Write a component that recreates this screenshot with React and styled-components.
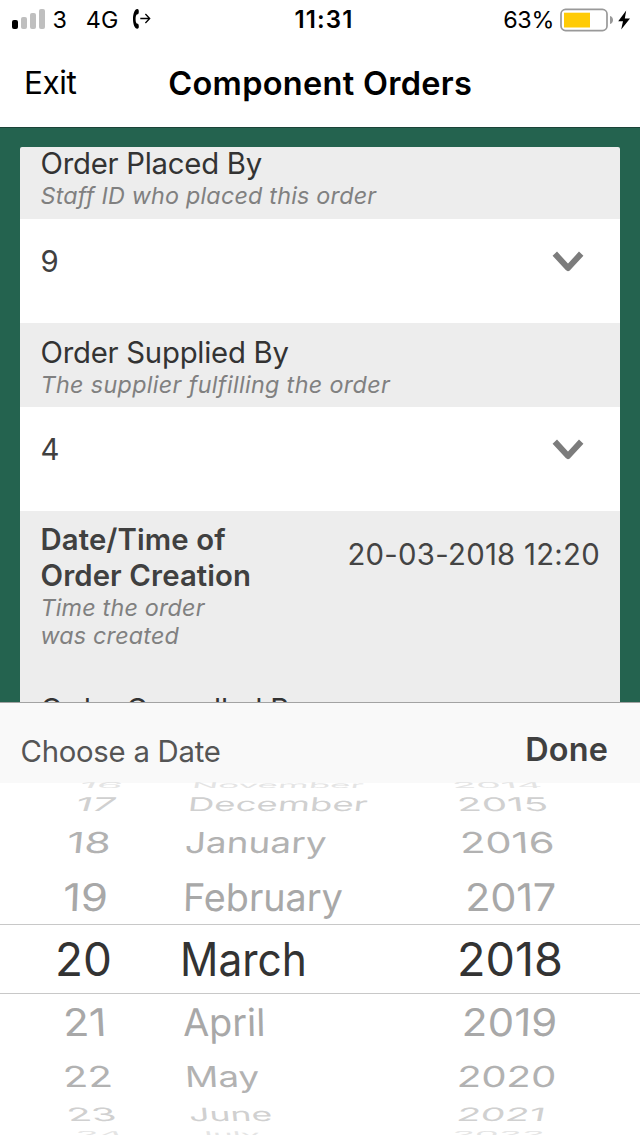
import React from "react";
import styled, { createGlobalStyle } from "styled-components";

const Global = createGlobalStyle`
  * { box-sizing: border-box; }
  body { margin: 0; background: #fff; font-family: Inter, "Liberation Sans", sans-serif; }
`;

const Screen = styled.div`
  display: flex;
  flex-direction: column;
  width: 640px;
  height: 1135px;
  overflow: hidden;
  background: #fff;
`;

const StatusBar = styled.header`
  display: grid;
  grid-template-columns: 1fr auto 1fr;
  align-items: center;
  height: 40px;
  padding: 0 9px 0 12px;
  font-size: 23.3px;
  line-height: 40px;
  color: #000;
`;

const StatusGroup = styled.div`
  display: flex;
  align-items: center;
  height: 40px;
  justify-content: ${(p) => (p.$end ? "flex-end" : "flex-start")};
`;

const StatusText = styled.span`
  margin-left: ${(p) => p.$gap || 0}px;
  letter-spacing: ${(p) => p.$track || 0}px;
`;

const Clock = styled.time`
  font-size: 24px;
  font-weight: 600;
  letter-spacing: 1.1px;
  padding-left: 5px;
`;

const Bars = styled.div`
  display: flex;
  align-items: flex-end;
  gap: 3px;
  height: 20px;
  margin-top: -2px;
`;

const Bar = styled.i`
  width: 6px;
  height: ${(p) => p.$h}px;
  border-radius: 2px;
  background: ${(p) => (p.$on ? "#000" : "#bfbfbf")};
`;

const ForwardIcon = styled.svg`
  margin: -2px 0 0 12.8px;
`;

const BatteryIcon = styled.svg`
  margin: -1px 0 0 6px;
`;

const NavBar = styled.nav`
  display: grid;
  grid-template-columns: 1fr auto 1fr;
  height: 88px;
  padding: 0 24px;
  border-bottom: 1px solid #1b4338;
`;

const NavButton = styled.button`
  justify-self: start;
  align-self: start;
  padding: 0;
  border: 0;
  background: none;
  font: 400 31.5px/85px Inter, sans-serif;
  letter-spacing: -0.4px;
  color: #000;
`;

const NavTitle = styled.h1`
  margin: 0;
  font-size: 32.5px;
  font-weight: 600;
  line-height: 87px;
  letter-spacing: 0.3px;
  padding-left: 0.5px;
`;

const Backdrop = styled.main`
  flex: none;
  height: 574px;
  padding: 19px 20px 0;
  background: #24634f;
  overflow: hidden;
`;

const Card = styled.section`
  height: 555px;
  overflow: hidden;
  border-radius: 2px 2px 0 0;
  background: #ededed;
`;

const Scroller = styled.div`
  margin-top: -12px;
`;

const FieldHeader = styled.div`
  height: ${(p) => p.$height || 84}px;
  display: flex;
  justify-content: space-between;
  padding: ${(p) => p.$top || 11}px 20px 0 20.5px;
`;

const FieldTitle = styled.h2`
  margin: 0;
  font-size: 29.3px;
  line-height: 36px;
  font-weight: ${(p) => (p.$strong ? 600 : 400)};
  letter-spacing: ${(p) => (p.$strong ? 0.12 : -0.24)}px;
  color: ${(p) => (p.$strong ? "#404040" : "#333")};
  white-space: pre-line;
`;

const FieldHint = styled.p`
  margin: 0;
  font-size: 23.3px;
  line-height: 28px;
  font-style: italic;
  letter-spacing: ${(p) => p.$track}px;
  color: #808080;
  white-space: pre-line;
`;

const FieldStamp = styled.time`
  font-size: 29.3px;
  line-height: 66px;
  letter-spacing: 0.28px;
  color: #444;
`;

const FieldSelect = styled.div`
  display: flex;
  align-items: center;
  justify-content: space-between;
  height: 104px;
  padding: 0 36px 19px 20.5px;
  background: #fff;
  font-size: 29.3px;
  line-height: 35px;
  color: #404040;
`;

const ChevronIcon = styled.svg`
  margin-top: -1px;
`;

const Sheet = styled.section`
  flex: 1;
  display: flex;
  flex-direction: column;
  overflow: hidden;
`;

const SheetBar = styled.div`
  display: flex;
  align-items: center;
  justify-content: space-between;
  flex: none;
  height: 81px;
  padding: 0 32px 0 20.5px;
  border-top: 1px solid #a3a3a3;
  background: #f9f9f9;
`;

const SheetTitle = styled.span`
  padding-top: 17px;
  font-size: 29.3px;
  line-height: 36px;
  letter-spacing: -0.25px;
  color: #555;
`;

const DoneButton = styled.button`
  padding: 13px 0 0;
  border: 0;
  background: none;
  font: 600 32.4px/36px Inter, sans-serif;
  letter-spacing: 0.15px;
  color: #404040;
`;

const Wheel = styled.div`
  flex: none;
`;

const WheelRow = styled.div`
  display: grid;
  grid-template-columns: 170px 260px 210px;
  align-items: center;
  height: ${(p) => p.$h}px;
  padding-top: ${(p) => p.$pad || 0}px;
  color: ${(p) => p.$color};
  font-size: ${(p) => (p.$selected ? 45.4 : 40)}px;
  border: solid #c8c8c8;
  border-width: ${(p) => (p.$selected ? "1px 0" : "0")};
`;

const WheelItem = styled.span`
  justify-self: start;
  line-height: 0;
  white-space: nowrap;
  margin-left: ${(p) => p.$left}px;
  transform-origin: 0 50%;
  transform: matrix(${(p) => `${p.$sx}, 0, ${p.$lean * p.$sy}, ${p.$sy}, 0, ${p.$dy}`});
`;

const COLUMN_START = [0, 170, 430];

// Each item: label, left edge on screen, horizontal stretch.
const ROWS = [
  { h: 4, sy: 0.2, dy: 0, color: "#e4e4e4", lean: [-0.5, -0.2, 0.25], items: [["16", 80, 1.045], ["November", 192.4, 0.875], ["2014", 452, 0.985]] },
  { h: 34.4, sy: 0.47, color: "#d0d0d0", lean: [-0.3, -0.12, 0.12], items: [["17", 76, 1.03], ["December", 187.8, 0.915], ["2015", 457, 1.01]] },
  { h: 41.8, sy: 0.72, color: "#b2b2b2", lean: [-0.1, -0.05, 0.06], items: [["18", 67, 1.071], ["January", 185, 0.923], ["2016", 459.6, 1.04]] },
  { h: 60.8, pad: 5.6, sy: 0.95, dy: 1.3, color: "#a8a8a8", lean: [-0.04, -0.02, 0.03], items: [["19", 62.5, 1.097], ["February", 182.5, 0.945], ["2017", 464.5, 1.035]] },
  { h: 70, pad: 1, sy: 1.01, dy: 1.2, selected: true, color: "#333", lean: [0, 0, 0], items: [["20", 55, 1.01], ["March", 179.5, 0.936], ["2018", 457.3, 1.03]] },
  { h: 56, sy: 0.95, color: "#a8a8a8", lean: [0.05, 0.02, -0.03], items: [["21", 63, 1.065], ["April", 183, 0.945], ["2019", 462, 1.05]] },
  { h: 52.6, sy: 0.72, color: "#b2b2b2", lean: [0.1, 0.05, -0.06], items: [["22", 62.5, 1.01], ["May", 185.2, 0.922], ["2020", 457.3, 1.0]] },
  { h: 22.8, sy: 0.46, color: "#d0d0d0", lean: [0.25, 0.1, -0.2], items: [["23", 67, 1.0], ["June", 189, 0.889], ["2021", 457, 0.98]] },
  { h: 17.2, sy: 0.2, dy: 0, color: "#e4e4e4", lean: [0.5, 0.2, -0.25], items: [["24", 76, 0.96], ["July", 194, 0.834], ["2022", 452, 0.94]] },
];

function Chevron() {
  return (
    <ChevronIcon width="32" height="21" viewBox="0 0 32 21">
      <path d="M2.8 2.6 L16 17 L29.2 2.6" fill="none" stroke="#7c7c7c" strokeWidth="6" strokeLinejoin="round" />
    </ChevronIcon>
  );
}

function SelectField({ title, hint, track, value, top }) {
  return (
    <>
      <FieldHeader $top={top}>
        <div>
          <FieldTitle>{title}</FieldTitle>
          <FieldHint $track={track}>{hint}</FieldHint>
        </div>
      </FieldHeader>
      <FieldSelect>
        {value}
        <Chevron />
      </FieldSelect>
    </>
  );
}

export default function App() {
  return (
    <Screen>
      <Global />
      <StatusBar>
        <StatusGroup>
          <Bars>
            <Bar $h={9} $on />
            <Bar $h={12} />
            <Bar $h={16} />
            <Bar $h={20} />
          </Bars>
          <StatusText $gap={7.5}>3</StatusText>
          <StatusText $gap={18.8} $track={0.3}>4G</StatusText>
          <ForwardIcon width="19" height="22" viewBox="0 0 19 22">
            <path d="M5.2 1 C2.8 1.2 1 5.5 1 11 C1 16.5 2.8 20.6 5.2 20.8 C6.5 20.8 6.9 19.8 6.8 18 C6.7 16.2 6 15.4 4.7 15.5 C3.8 14.4 3.6 12.8 3.6 11 C3.6 9.2 3.8 7.6 4.7 6.4 C6 6.5 6.7 5.7 6.8 3.9 C6.9 2 6.5 1 5.2 1 Z" fill="#000" />
            <path d="M8.3 10.5 H17.4 M13.4 6 L17.7 10.5 L13.4 15" fill="none" stroke="#000" strokeWidth="1.3" />
          </ForwardIcon>
        </StatusGroup>
        <Clock>11:31</Clock>
        <StatusGroup $end>
          <StatusText $track={-0.3}>63%</StatusText>
          <BatteryIcon width="71" height="24" viewBox="0 0 71 24">
            <rect x="1" y="1.4" width="46" height="21.2" rx="4.6" fill="#fff" stroke="#999" strokeWidth="1.7" />
            <rect x="4" y="4.7" width="26" height="14.8" fill="#ffcb05" />
            <path d="M50 8 C54 9 54 15 50 16 Z" fill="#999" />
            <path d="M66.2 2.5 L58.2 13.2 H63 L61.2 21.5 L70 10.4 H64.8 Z" fill="#000" />
          </BatteryIcon>
        </StatusGroup>
      </StatusBar>
      <NavBar>
        <NavButton>Exit</NavButton>
        <NavTitle>Component Orders</NavTitle>
      </NavBar>
      <Backdrop>
        <Card>
          <Scroller>
            <SelectField title="Order Placed By" hint="Staff ID who placed this order" track={0.22} value="9" top={11} />
            <SelectField title="Order Supplied By" hint="The supplier fulfilling the order" track={0.36} value="4" top={11.5} />
            <FieldHeader $height={169}>
              <div>
                <FieldTitle $strong>{"Date/Time of\nOrder Creation"}</FieldTitle>
                <FieldHint $track={0.2}>{"Time the order\nwas created"}</FieldHint>
              </div>
              <FieldStamp>20-03-2018 12:20</FieldStamp>
            </FieldHeader>
            <FieldHeader $top={12}>
              <FieldTitle>Order Cancelled By</FieldTitle>
            </FieldHeader>
          </Scroller>
        </Card>
      </Backdrop>
      <Sheet>
        <SheetBar>
          <SheetTitle>Choose a Date</SheetTitle>
          <DoneButton>Done</DoneButton>
        </SheetBar>
        <Wheel>
          {ROWS.map((row, r) => (
            <WheelRow key={r} $h={row.h} $pad={row.pad} $color={row.color} $selected={row.selected}>
              {row.items.map(([label, x, sx], i) => (
                <WheelItem key={label} $left={x - COLUMN_START[i]} $sx={sx} $sy={row.sy} $dy={row.dy ?? 0.8} $lean={row.lean[i]}>
                  {label}
                </WheelItem>
              ))}
            </WheelRow>
          ))}
        </Wheel>
      </Sheet>
    </Screen>
  );
}
